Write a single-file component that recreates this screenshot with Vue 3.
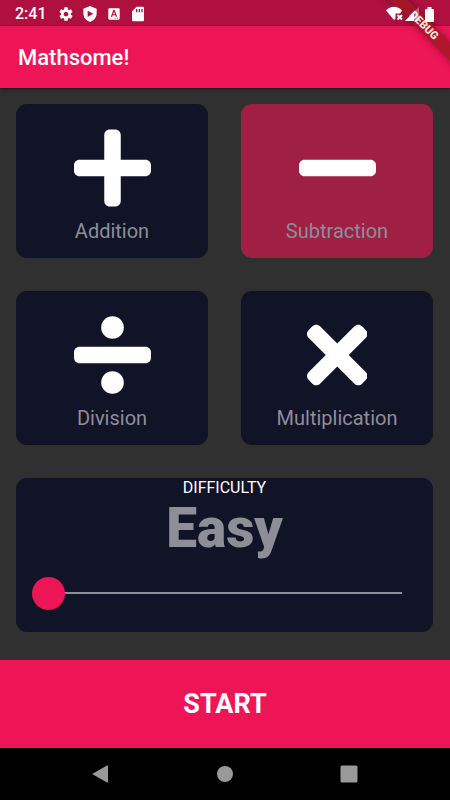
<script setup>
import { ref, computed } from 'vue'

const bar = 'M416 208H32c-17.67 0-32 14.33-32 32v32c0 17.67 14.33 32 32 32h384c17.67 0 32-14.33 32-32v-32c0-17.67-14.33-32-32-32z'
const operations = [
  {
    name: 'Addition',
    viewBox: '0 0 448 512',
    path: 'M416 208H272V64c0-17.67-14.33-32-32-32h-32c-17.67 0-32 14.33-32 32v144H32c-17.67 0-32 14.33-32 32v32c0 17.67 14.33 32 32 32h144v144c0 17.67 14.33 32 32 32h32c17.67 0 32-14.33 32-32V304h144c17.67 0 32-14.33 32-32v-32c0-17.67-14.33-32-32-32z'
  },
  { name: 'Subtraction', viewBox: '0 0 448 512', path: bar },
  {
    name: 'Division',
    viewBox: '0 0 448 512',
    path: bar + 'M224 30a66 66 0 1 0 0 132a66 66 0 1 0 0-132zM224 350a66 66 0 1 0 0 132a66 66 0 1 0 0-132z'
  },
  {
    name: 'Multiplication',
    viewBox: '0 0 352 512',
    path: 'M242.72 256l100.07-100.07c12.28-12.28 12.28-32.19 0-44.48l-22.24-22.24c-12.28-12.28-32.19-12.28-44.48 0L176 189.28 75.93 89.21c-12.28-12.28-32.19-12.28-44.48 0L9.21 111.45c-12.28 12.28-12.28 32.19 0 44.48L109.28 256 9.21 356.07c-12.28 12.28-12.28 32.19 0 44.48l22.24 22.24c12.28 12.28 32.2 12.28 44.48 0L176 322.72l100.07 100.07c12.28 12.28 32.2 12.28 44.48 0l22.24-22.24c12.28-12.28 12.28-32.19 0-44.48L242.72 256z'
  }
]
const selected = ref('Subtraction')

const levels = ['Easy', 'Medium', 'Hard']
const level = ref(0)
const levelName = computed(() => levels[level.value])
</script>

<template>
  <div class="screen">
    <div class="status">
      <div class="status-group">
        <span class="clock">2:41</span>
        <svg class="status-icon" viewBox="0 0 24 24"><path d="M19.43 12.98c.04-.32.07-.64.07-.98s-.03-.66-.07-.98l2.11-1.65c.19-.15.24-.42.12-.64l-2-3.46c-.12-.22-.39-.3-.61-.22l-2.49 1c-.52-.4-1.08-.73-1.69-.98l-.38-2.65C14.46 2.18 14.25 2 14 2h-4c-.25 0-.46.18-.49.42l-.38 2.65c-.61.25-1.17.59-1.69.98l-2.49-1c-.23-.09-.49 0-.61.22l-2 3.46c-.13.22-.07.49.12.64l2.11 1.65c-.04.32-.07.65-.07.98s.03.66.07.98l-2.11 1.65c-.19.15-.24.42-.12.64l2 3.46c.12.22.39.3.61.22l2.49-1c.52.4 1.08.73 1.69.98l.38 2.65c.03.24.24.42.49.42h4c.25 0 .46-.18.49-.42l.38-2.65c.61-.25 1.17-.59 1.69-.98l2.49 1c.23.09.49 0 .61-.22l2-3.46c.12-.22.07-.49-.12-.64l-2.11-1.65zM12 15.500c-1.930 0-3.500-1.570-3.500-3.500s1.570-3.500 3.500-3.500 3.500 1.570 3.500 3.500-1.570 3.500-3.500 3.500z" /></svg>
        <svg class="status-icon" viewBox="0 0 24 24"><path fill-rule="evenodd" d="M12 0L2 4v7c0 6 4 11 10 13 6-2 10-7 10-13V4zM8.500 7v9.500l8.500-4.750z" /></svg>
        <svg class="status-icon" viewBox="-2 -2 28 28"><path fill-rule="evenodd" d="M4 2h16a2 2 0 0 1 2 2v16a2 2 0 0 1-2 2H4a2 2 0 0 1-2-2V4a2 2 0 0 1 2-2zM10.800 5L6.500 17h2.300l.9-2.700h4.600l.9 2.700h2.300L13.200 5zM12 7.700l1.600 4.700h-3.200zM13 18.500v1.500h2v-1.500zM17 18.500v1.500h2v-1.500z" /></svg>
        <svg class="status-icon" viewBox="0 0 24 24"><path fill-rule="evenodd" d="M19 1H10L3 8v13a2 2 0 0 0 2 2h14a2 2 0 0 0 2-2V3a2 2 0 0 0-2-2zM9 4.500v5h2v-5zM13 4.500v5h2v-5zM17 4.500v5h2v-5z" /></svg>
      </div>
      <div class="status-group status-right">
        <svg class="wifi" viewBox="0 0 18 16"><path d="M1 4.500C5.500-.4 12.500-.4 17 4.500l-2 3h-4.500V12.500l-1.500 1.500z" /><path class="cross" d="M12.500 9l4.500 4.500M17 9l-4.500 4.500" /></svg>
        <svg class="signal" viewBox="0 0 14 14"><path class="dim" d="M14 0v14H0z" /><path d="M9 5v9H0z" /></svg>
        <svg class="battery" viewBox="0 0 9 15"><path d="M2.500 0h4v2H8a1 1 0 0 1 1 1v11a1 1 0 0 1-1 1H1a1 1 0 0 1-1-1V3a1 1 0 0 1 1-1h1.500z" /></svg>
      </div>
    </div>

    <header class="app-bar"><h1>Mathsome!</h1></header>

    <main class="board">
      <button
        v-for="op in operations"
        :key="op.name"
        type="button"
        class="card operation"
        :class="{ selected: selected === op.name }"
        :aria-pressed="selected === op.name"
        @click="selected = op.name"
      >
        <svg class="operation-icon" :viewBox="op.viewBox"><path :d="op.path" /></svg>
        <span class="operation-name">{{ op.name }}</span>
      </button>

      <section class="card difficulty">
        <label class="difficulty-title" for="difficulty">DIFFICULTY</label>
        <output class="difficulty-level" for="difficulty">{{ levelName }}</output>
        <input id="difficulty" v-model.number="level" class="slider" type="range" min="0" max="2" step="1" />
      </section>
    </main>

    <button type="button" class="start">START</button>

    <nav class="system-nav">
      <button type="button" aria-label="Back"><svg viewBox="0 0 18 18"><path d="M16 1v16a.6.6 0 0 1-1 .5L1 9.600a.7.7 0 0 1 0-1.200L15 .5a.6.6 0 0 1 1 .5z" /></svg></button>
      <button type="button" aria-label="Home"><svg viewBox="0 0 18 18"><circle cx="9" cy="9" r="8" /></svg></button>
      <button type="button" aria-label="Recent apps"><svg viewBox="0 0 18 18"><rect x="0.500" y="0.500" width="17" height="17" rx="1.500" /></svg></button>
    </nav>

    <div class="banner-corner"><span class="banner">DEBUG</span></div>
  </div>
</template>

<style>
body {
  margin: 0;
  background: #303030;
}
</style>

<style scoped>
.screen {
  position: relative;
  display: flex;
  flex-direction: column;
  min-height: 100vh;
  background: #303030;
  color: #fff;
  font-family: Roboto, "Liberation Sans", sans-serif;
}
.screen * {
  box-sizing: border-box;
}
button {
  border: 0;
  margin: 0;
  padding: 0;
  font-family: inherit;
  color: inherit;
  cursor: pointer;
}
svg {
  display: block;
  fill: #fff;
}

.status {
  display: flex;
  justify-content: space-between;
  align-items: center;
  height: 26px;
  padding: 2px 16px 0 15px;
  background: #b0103f;
}
.status-group {
  display: flex;
  align-items: center;
  gap: 8px;
}
/* System icons are painted above the ribbon */
.status-right {
  position: relative;
  z-index: 2;
  gap: 2px;
}
.clock {
  margin-right: 3px;
  font-size: 16px;
  line-height: 24px;
  font-weight: 500;
}
.status-icon {
  width: 16px;
  height: 16px;
}
.wifi {
  width: 18px;
  height: 16px;
}
.cross {
  fill: none;
  stroke: #fff;
  stroke-width: 2;
}
.signal {
  width: 14px;
  height: 14px;
  margin-right: 4px;
}
.dim {
  fill: rgba(255, 255, 255, 0.35);
}
.battery {
  width: 9px;
  height: 15px;
}

.app-bar {
  position: relative;
  display: flex;
  align-items: center;
  height: 62px;
  padding: 2px 18px 0;
  background: #ed1556;
  box-shadow: 0 1px 3px rgba(0, 0, 0, 0.6);
}
h1 {
  margin: 0;
  font-size: 22px;
  line-height: 28px;
  font-weight: 500;
}

.board {
  flex: 1;
  display: grid;
  grid-template-columns: 1fr 1fr;
  grid-auto-rows: 1fr;
  gap: 33px;
  padding: 16px 17px 28px 16px;
}
.card {
  display: flex;
  flex-direction: column;
  align-items: center;
  border-radius: 11px;
  background: #111327;
}
.operation {
  justify-content: center;
  gap: 7px;
  padding-top: 4px;
}
.operation.selected {
  background: #a02045;
}
.operation-icon {
  height: 88px;
}
.operation-name {
  font-size: 20px;
  line-height: 24px;
  color: #8d8e98;
}

.difficulty {
  grid-column: 1 / -1;
  padding: 0 16px;
}
.difficulty-title {
  font-size: 16px;
  line-height: 20px;
}
.difficulty-level {
  font-size: 55px;
  line-height: 60px;
  font-weight: 900;
  color: #8d8e98;
}
.slider {
  appearance: none;
  width: 100%;
  height: 34px;
  margin: 18px 0 0;
  background: linear-gradient(#8d8e98, #8d8e98) center / calc(100% - 30px) 2px no-repeat;
}
.slider::-webkit-slider-thumb {
  appearance: none;
  width: 33px;
  height: 33px;
  border-radius: 50%;
  background: #ed1556;
}

.start {
  height: 88px;
  background: #ed1556;
  font-size: 27px;
  line-height: 32px;
  font-weight: 700;
}

.system-nav {
  display: flex;
  justify-content: center;
  gap: 90px;
  height: 52px;
  background: #000;
}
.system-nav button {
  display: grid;
  place-items: center;
  width: 34px;
  background: none;
}
.system-nav svg {
  width: 18px;
  height: 18px;
  fill: #999;
}

/* Ribbon lying across the top right corner */
.banner-corner {
  position: absolute;
  z-index: 1;
  top: 0;
  right: 0;
  width: 88px;
  height: 88px;
  overflow: hidden;
  pointer-events: none;
}
.banner {
  position: absolute;
  top: 19px;
  right: -34px;
  width: 120px;
  transform: rotate(45deg);
  background: rgba(160, 24, 32, 0.8);
  box-shadow: 0 0 7px rgba(0, 0, 0, 0.35);
  color: rgba(255, 255, 255, 0.9);
  font-size: 11px;
  line-height: 13px;
  font-weight: 900;
  text-align: center;
}
</style>
